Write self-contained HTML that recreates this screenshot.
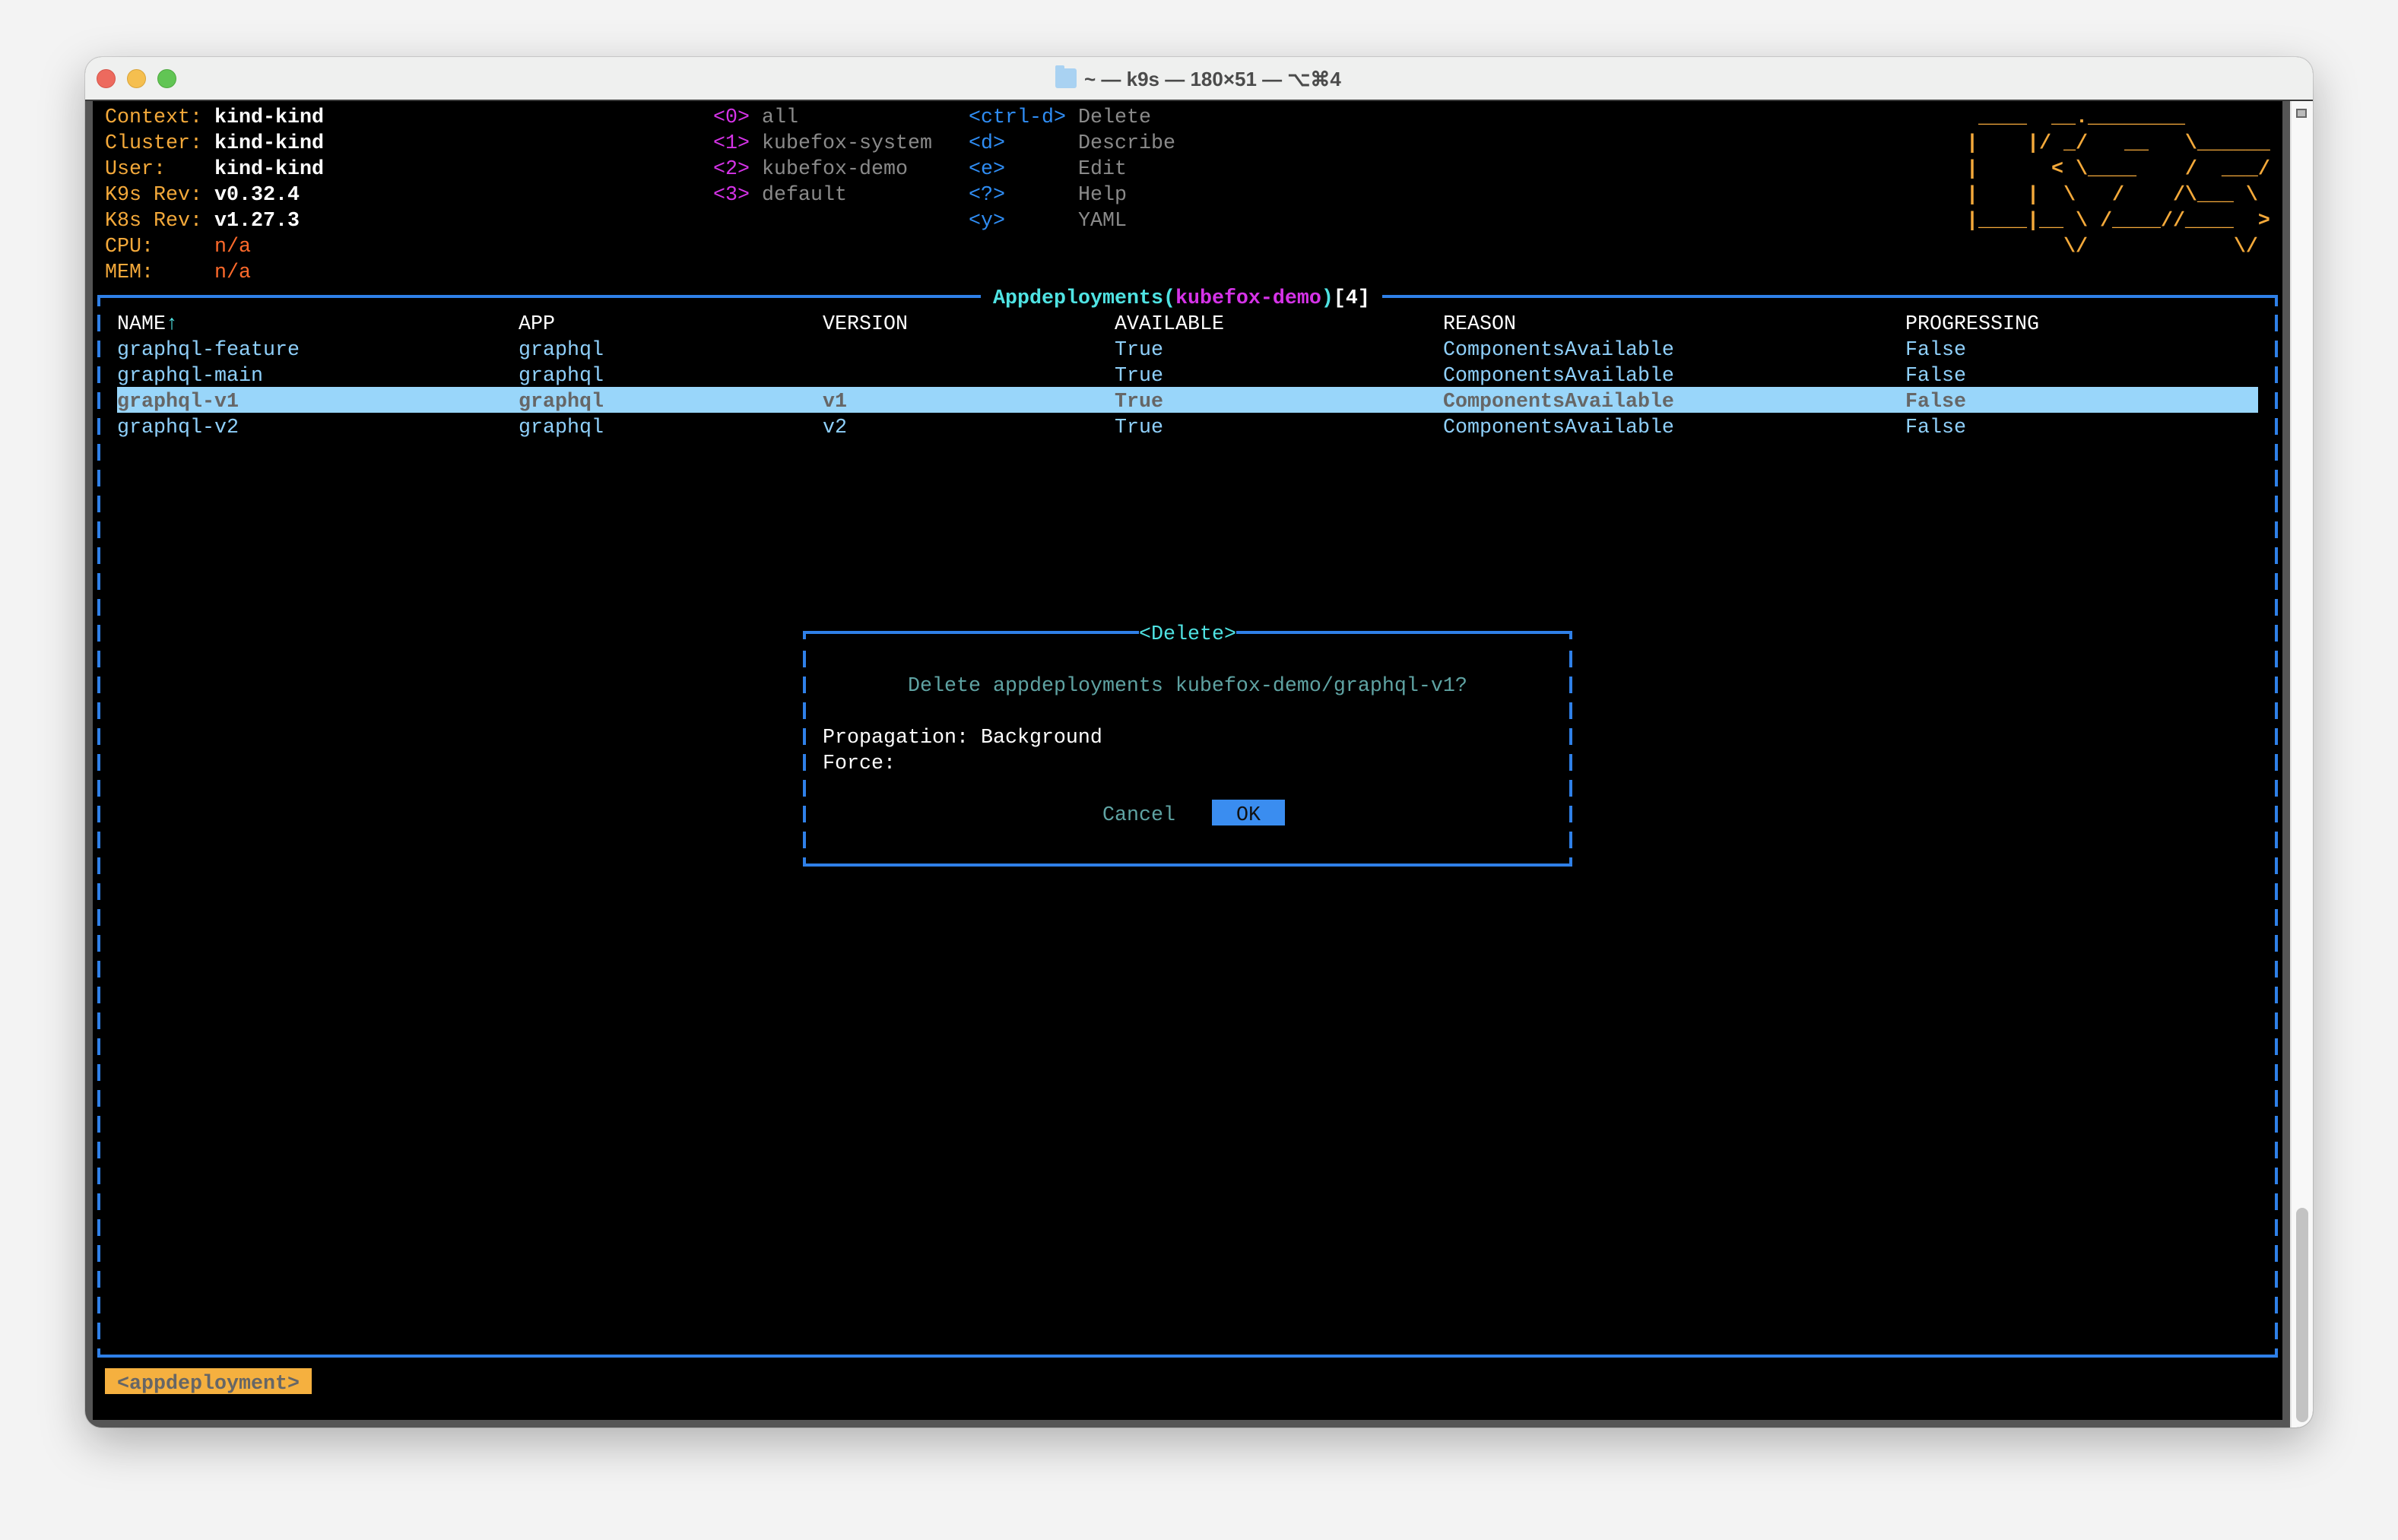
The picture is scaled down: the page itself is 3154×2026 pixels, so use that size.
<!DOCTYPE html>
<html><head><meta charset="utf-8"><style>
*{margin:0;padding:0;box-sizing:border-box}
body{width:3154px;height:2026px;background:#f3f3f3;position:relative;overflow:hidden;font-family:"Liberation Mono",monospace}
.win{position:absolute;left:112px;top:75px;width:2930px;height:1803px;border-radius:22px;background:#555;box-shadow:0 20px 60px rgba(0,0,0,.28),0 0 0 1px rgba(0,0,0,.12);overflow:hidden}
.tb{position:absolute;left:0;top:0;width:100%;height:58px;background:#eff0ef;border-bottom:2px solid #3a3a3a}
.dot{position:absolute;top:16px;width:25px;height:25px;border-radius:50%}
.term{position:absolute;left:10px;top:58px;width:2880px;height:1735px;background:#000}
.sb{position:absolute;left:2900px;top:58px;width:30px;height:1745px;background:#f8f8f8;border-left:2px solid #e4e4e4}
.t{position:absolute;font-size:26.67px;line-height:34px;white-space:pre;height:34px;margin-top:3px}
.o{color:#f4a93a}.w{color:#fff;font-weight:bold}.r{color:#ff6a2b}.m{color:#d633e8}.g{color:#8a8a8a}.b{color:#2f8df4}
.sk{color:#8fd0fb}.h{color:#fff}.cy{color:#4fe3e3}.cb{color:#5fa3a3}
.hl{position:absolute;left:154px;top:509px;width:2816px;height:34px;background:#99d6fa}
.hline{position:absolute;height:4px;background:#2f80e8}
.vd{position:absolute;width:4px;background:repeating-linear-gradient(to bottom,transparent 0 7px,#2f80e8 7px 29px,transparent 29px 34px)}
.vs{position:absolute;width:4px;background:#2f80e8}
</style></head><body>
<div class="win">
 <div class="tb">
  <div class="dot" style="left:15px;background:#ed6a5e;border:1px solid #d5554a"></div>
  <div class="dot" style="left:55px;background:#f5bf4f;border:1px solid #d9a43a"></div>
  <div class="dot" style="left:95px;background:#61c554;border:1px solid #4ea93f"></div>
  <div style="position:absolute;left:1276px;top:15px;width:28px;height:26px;background:#a9d2f2;border-radius:3px"></div>
  <div style="position:absolute;left:1276px;top:11px;width:12px;height:6px;background:#a9d2f2;border-radius:2px 2px 0 0"></div>
  <div style="position:absolute;left:1314px;top:11px;font-family:'Liberation Sans',sans-serif;font-weight:bold;font-size:26px;line-height:36px;color:#4b4b4b;white-space:pre">~ — k9s — 180×51 — ⌥⌘4</div>
 </div>
 <div class="term"></div>
 <div class="sb">
  <div style="position:absolute;left:6px;top:10px;width:14px;height:12px;border:2px solid #666;background:#bbb"></div>
  <div style="position:absolute;left:6px;top:1456px;width:16px;height:282px;border-radius:8px;background:#c3c3c3"></div>
 </div>
</div>

<div class="t o" style="left:138px;top:135px">Context:</div><div class="t w" style="left:282px;top:135px">kind-kind</div>
<div class="t o" style="left:138px;top:169px">Cluster:</div><div class="t w" style="left:282px;top:169px">kind-kind</div>
<div class="t o" style="left:138px;top:203px">User:</div><div class="t w" style="left:282px;top:203px">kind-kind</div>
<div class="t o" style="left:138px;top:237px">K9s Rev:</div><div class="t w" style="left:282px;top:237px">v0.32.4</div>
<div class="t o" style="left:138px;top:271px">K8s Rev:</div><div class="t w" style="left:282px;top:271px">v1.27.3</div>
<div class="t o" style="left:138px;top:305px">CPU:</div><div class="t r" style="left:282px;top:305px">n/a</div>
<div class="t o" style="left:138px;top:339px">MEM:</div><div class="t r" style="left:282px;top:339px">n/a</div>

<div class="t m" style="left:938px;top:135px">&lt;0&gt;</div><div class="t g" style="left:1002px;top:135px">all</div>
<div class="t m" style="left:938px;top:169px">&lt;1&gt;</div><div class="t g" style="left:1002px;top:169px">kubefox-system</div>
<div class="t m" style="left:938px;top:203px">&lt;2&gt;</div><div class="t g" style="left:1002px;top:203px">kubefox-demo</div>
<div class="t m" style="left:938px;top:237px">&lt;3&gt;</div><div class="t g" style="left:1002px;top:237px">default</div>

<div class="t b" style="left:1274px;top:135px">&lt;ctrl-d&gt;</div><div class="t g" style="left:1418px;top:135px">Delete</div>
<div class="t b" style="left:1274px;top:169px">&lt;d&gt;</div><div class="t g" style="left:1418px;top:169px">Describe</div>
<div class="t b" style="left:1274px;top:203px">&lt;e&gt;</div><div class="t g" style="left:1418px;top:203px">Edit</div>
<div class="t b" style="left:1274px;top:237px">&lt;?&gt;</div><div class="t g" style="left:1418px;top:237px">Help</div>
<div class="t b" style="left:1274px;top:271px">&lt;y&gt;</div><div class="t g" style="left:1418px;top:271px">YAML</div>

<div class="t o" style="left:2586px;top:135px;height:auto;font-weight:bold"> ____  __.________
|    |/ _/   __   \______
|      &lt; \____    /  ___/
|    |  \   /    /\___ \
|____|__ \ /____//____  &gt;
        \/            \/</div>

<div class="hline" style="left:128px;top:388px;width:1162px"></div>
<div class="hline" style="left:1818px;top:388px;width:1178px"></div>
<div class="t" style="left:1306px;top:373px;font-weight:bold"><span class="cy">Appdeployments(</span><span class="m">kubefox-demo</span><span class="cy">)</span><span class="h">[4]</span></div>
<div class="vs" style="left:128px;top:388px;height:15px"></div>
<div class="vs" style="left:2992px;top:388px;height:15px"></div>
<div class="vd" style="left:128px;top:407px;height:1360px"></div>
<div class="vd" style="left:2992px;top:407px;height:1360px"></div>
<div class="vs" style="left:128px;top:1774px;height:12px"></div>
<div class="vs" style="left:2992px;top:1774px;height:12px"></div>
<div class="hline" style="left:128px;top:1782px;width:2868px"></div>

<div class="t h" style="left:154px;top:407px">NAME<span class="cy">↑</span></div>
<div class="t h" style="left:682px;top:407px">APP</div>
<div class="t h" style="left:1082px;top:407px">VERSION</div>
<div class="t h" style="left:1466px;top:407px">AVAILABLE</div>
<div class="t h" style="left:1898px;top:407px">REASON</div>
<div class="t h" style="left:2506px;top:407px">PROGRESSING</div>

<div class="t sk" style="left:154px;top:441px">graphql-feature</div><div class="t sk" style="left:682px;top:441px">graphql</div><div class="t sk" style="left:1466px;top:441px">True</div><div class="t sk" style="left:1898px;top:441px">ComponentsAvailable</div><div class="t sk" style="left:2506px;top:441px">False</div>
<div class="t sk" style="left:154px;top:475px">graphql-main</div><div class="t sk" style="left:682px;top:475px">graphql</div><div class="t sk" style="left:1466px;top:475px">True</div><div class="t sk" style="left:1898px;top:475px">ComponentsAvailable</div><div class="t sk" style="left:2506px;top:475px">False</div>
<div class="hl"></div>
<div class="t" style="left:154px;top:509px;color:#666;font-weight:bold">graphql-v1</div><div class="t" style="left:682px;top:509px;color:#666;font-weight:bold">graphql</div><div class="t" style="left:1082px;top:509px;color:#666;font-weight:bold">v1</div><div class="t" style="left:1466px;top:509px;color:#666;font-weight:bold">True</div><div class="t" style="left:1898px;top:509px;color:#666;font-weight:bold">ComponentsAvailable</div><div class="t" style="left:2506px;top:509px;color:#666;font-weight:bold">False</div>
<div class="t sk" style="left:154px;top:543px">graphql-v2</div><div class="t sk" style="left:682px;top:543px">graphql</div><div class="t sk" style="left:1082px;top:543px">v2</div><div class="t sk" style="left:1466px;top:543px">True</div><div class="t sk" style="left:1898px;top:543px">ComponentsAvailable</div><div class="t sk" style="left:2506px;top:543px">False</div>

<div class="hline" style="left:1056px;top:830px;width:442px"></div>
<div class="hline" style="left:1626px;top:830px;width:442px"></div>
<div class="t cy" style="left:1498px;top:815px">&lt;Delete&gt;</div>
<div class="vs" style="left:1056px;top:830px;height:11px"></div>
<div class="vs" style="left:2064px;top:830px;height:11px"></div>
<div class="vd" style="left:1056px;top:849px;height:272px"></div>
<div class="vd" style="left:2064px;top:849px;height:272px"></div>
<div class="vs" style="left:1056px;top:1128px;height:12px"></div>
<div class="vs" style="left:2064px;top:1128px;height:12px"></div>
<div class="hline" style="left:1056px;top:1136px;width:1012px"></div>
<div class="t cb" style="left:1194px;top:883px">Delete appdeployments kubefox-demo/graphql-v1?</div>
<div class="t h" style="left:1082px;top:951px">Propagation: Background</div>
<div class="t h" style="left:1082px;top:985px">Force:</div>
<div class="t cb" style="left:1450px;top:1053px">Cancel</div>
<div style="position:absolute;left:1594px;top:1052px;width:96px;height:34px;background:#3a8df0"></div>
<div class="t" style="left:1626px;top:1053px;color:#111">OK</div>

<div style="position:absolute;left:138px;top:1800px;width:272px;height:34px;background:#f5b03f"></div>
<div class="t" style="left:138px;top:1801px;color:#666;font-weight:bold"> &lt;appdeployment&gt; </div>
</body></html>
